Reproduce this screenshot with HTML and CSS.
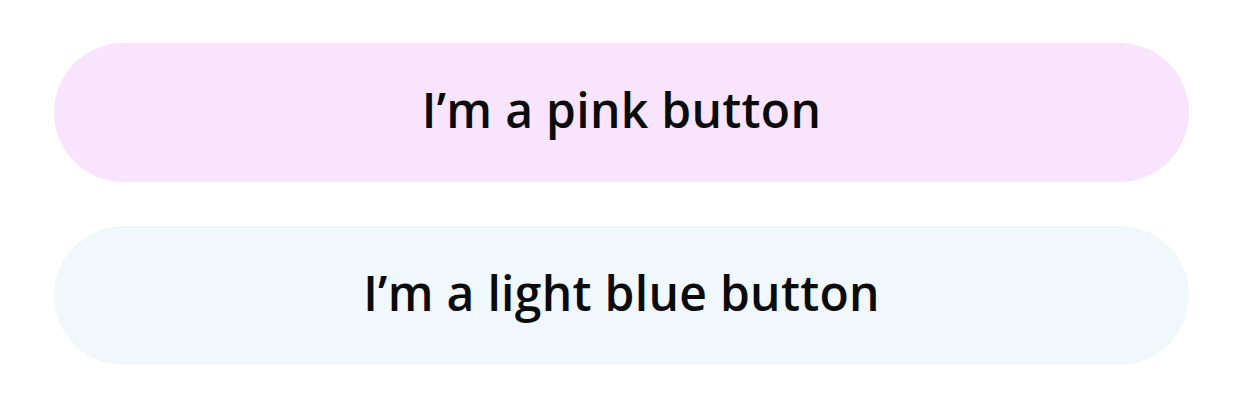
FILE: index.html
```html
<!DOCTYPE html>
<html lang="en">
<head>
    <meta charset="UTF-8">
    <meta name="viewport" content="width=device-width, initial-scale=1.0">
    <title>Buttons</title>
    <link rel="stylesheet" href="styles.css">
</head>
<body>

<div class="container">
    <button class="btn pink">I’m a pink button</button>
    <button class="btn light-blue">I’m a light blue button</button>
</div>

</body>
</html>
```

FILE: styles.css
```css
body {
    margin: 0;
    background-color: #ffffff;
    font-family: "Open Sans", "Liberation Sans", sans-serif;
}
.container {
    display: flex;
    flex-direction: column;
    gap: 44px;
    width: 1135px;
    padding: 43px 0 0 54px;
}
.btn {
    height: 139px;
    padding: 0 0 7px;
    border: none;
    border-radius: 70px;
    font-family: inherit;
    font-size: 48px;
    font-weight: 600;
    letter-spacing: 0.3px;
    color: #0b0b0b;
    cursor: pointer;
}
.pink {
    background-color: #f8e4fc;
}
.light-blue {
    background-color: #f1f8fc;
}
```
